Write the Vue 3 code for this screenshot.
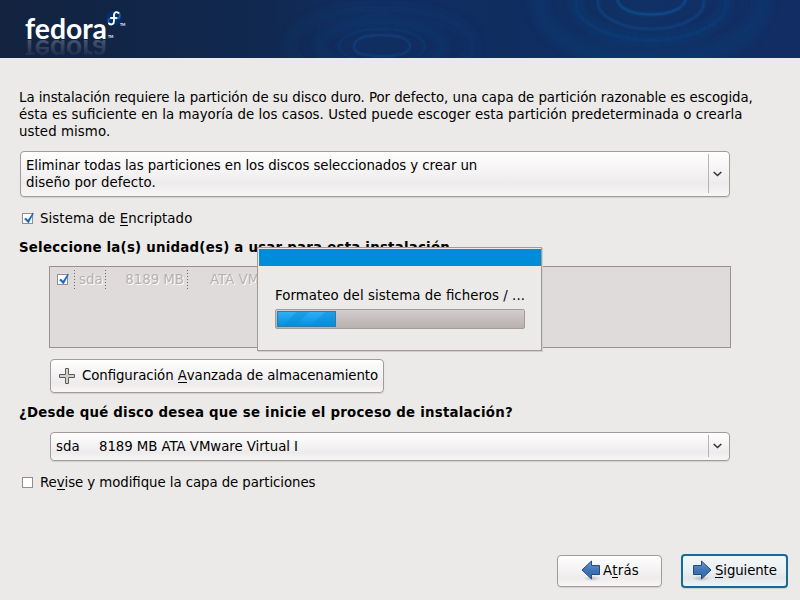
<script setup>
const columns = [
  { text: 'sda', cls: 'name' },
  { text: '8189 MB', cls: 'size' },
  { text: 'ATA VMware Virtual I', cls: 'model' }
]
const progress = 24
</script>

<template>
  <div class="screen">
    <header class="banner">
      <svg width="800" height="58" viewBox="0 0 800 58">
        <defs>
          <linearGradient id="bg" x1="0" x2="1" y1="0" y2="0">
            <stop offset="0" stop-color="#13233f" />
            <stop offset=".15" stop-color="#112547" />
            <stop offset=".32" stop-color="#11284f" />
            <stop offset=".45" stop-color="#112e60" />
            <stop offset=".64" stop-color="#102d60" />
            <stop offset=".8" stop-color="#103165" />
            <stop offset="1" stop-color="#122d64" />
          </linearGradient>
          <linearGradient id="fade" x1="0" x2="0" y1="39" y2="54" gradientUnits="userSpaceOnUse">
            <stop offset="0" stop-color="#fff" stop-opacity=".24" />
            <stop offset="1" stop-color="#fff" stop-opacity=".06" />
          </linearGradient>
          <mask id="mirror" maskUnits="userSpaceOnUse" x="0" y="39" width="140" height="16">
            <rect y="39" width="140" height="16" fill="url(#fade)" />
          </mask>
          <filter id="soft" x="-20%" y="-40%" width="140%" height="180%"><feGaussianBlur stdDeviation="1.1" /></filter>
          <filter id="softer" x="-20%" y="-40%" width="140%" height="180%"><feGaussianBlur stdDeviation="4" /></filter>
        </defs>
        <rect width="800" height="58" fill="url(#bg)" />
        <g fill="none" stroke="#11498b">
          <g filter="url(#softer)">
            <ellipse cx="381" cy="46" rx="62" ry="24" stroke-width="5" opacity=".35" />
            <ellipse cx="381" cy="46" rx="92" ry="38" stroke-width="12" opacity=".1" />
            <ellipse cx="651" cy="2" rx="75" ry="38" stroke-width="6" opacity=".45" />
            <ellipse cx="651" cy="2" rx="112" ry="60" stroke-width="18" opacity=".18" />
          </g>
          <g filter="url(#soft)">
            <ellipse cx="382" cy="46" rx="43" ry="17" stroke-width="2" opacity=".4" />
            <path d="M354 47c0-7 8-12 28-12s28 5 28 11-8 10-28 10-28-3-28-9z" stroke-width="1.800" opacity=".8" />
            <ellipse cx="651" cy="2" rx="53" ry="27" stroke-width="3" opacity=".6" />
            <ellipse cx="651" cy="2" rx="76" ry="38" stroke-width="3" opacity=".25" />
            <path d="M617-2c1 11 16 16.500 34 16.500S685 9 686-2" stroke="#10569b" stroke-width="1.800" />
          </g>
        </g>
        <g class="wordmark" fill="#fff">
          <text id="word" x="25" y="39" textLength="82" lengthAdjust="spacingAndGlyphs">fedora</text>
          <g mask="url(#mirror)">
            <use href="#word" transform="matrix(1 0 0 -1 0 79)" />
          </g>
          <text class="tm" x="108" y="38">TM</text>
          <text class="tm" x="120" y="26">TM</text>
        </g>
        <circle cx="114" cy="18" r="7.600" fill="#062f6e" />
        <path d="M112.800 18.200c-2.300-.5-4.500.8-4.500 3s1.800 3 3 3M114.500 18.500h2.200c2 0 3.200-1.600 3.200-3.100 0-1.900-1.400-3.300-3.200-3.300" fill="none" stroke="#1b63ac" stroke-width="1.600" />
        <path d="M118.500 13c-2-1.700-4.500-.7-4.500 2v6c0 3.400-3 4.400-5 2.500M111 18h5.500" fill="none" stroke="#fff" stroke-width="1.900" stroke-linecap="round" />
      </svg>
    </header>

    <main class="content">
      <p class="intro">
        <span class="l1">La instalación requiere la partición de su disco duro. Por defecto, una capa de partición razonable es escogida,</span><br>
        <span class="l2">ésta es suficiente en la mayoría de los casos. Usted puede escoger esta partición predeterminada o crearla</span><br>
        <span class="l3">usted mismo.</span>
      </p>

      <div class="combo scheme">
        <span class="value"><span class="l4">Eliminar todas las particiones en los discos seleccionados y crear un</span><br><span class="l5">diseño por defecto.</span></span>
        <span class="drop"><svg width="9" height="6" viewBox="0 0 9 6"><path d="M.7 1l3.800 3.500L8.300 1" /></svg></span>
      </div>

      <label class="check encrypt">
        <span class="box"><svg width="13" height="13" viewBox="0 0 13 13"><path d="M2.500 7l1.500-1 2 2.300L10.800 1l.7.500-5 9.500z" /></svg></span>
        <span class="l6">Sistema de <u>E</u>ncriptado</span>
      </label>

      <h2 class="drives-title"><span class="l7">Seleccione la(s) unidad(es) a usar para esta instalación.</span></h2>

      <div class="drives">
        <span class="box"><svg width="13" height="13" viewBox="0 0 13 13"><path d="M2.500 7l1.500-1 2 2.300L10.800 1l.7.500-5 9.500z" /></svg></span>
        <span v-for="c in columns" :key="c.cls" class="cell" :class="c.cls">{{ c.text }}</span>
      </div>

      <button class="btn advanced">
        <svg width="16" height="16" viewBox="0 0 16 16"><path d="M6.500.5h3v6h6v3h-6v6h-3v-6h-6v-3h6z" fill="#d0d1cd" stroke="#5c5e59" /></svg>
        <span class="l8">Configuración <u>A</u>vanzada de almacenamiento</span>
      </button>

      <h2 class="boot-title"><span class="l9">¿Desde qué disco desea que se inicie el proceso de instalación?</span></h2>

      <div class="combo boot">
        <span class="value"><span class="dev">sda</span><span class="l10">8189 MB ATA VMware Virtual I</span></span>
        <span class="drop"><svg width="9" height="6" viewBox="0 0 9 6"><path d="M.7 1l3.800 3.500L8.300 1" /></svg></span>
      </div>

      <label class="check review">
        <span class="box"></span>
        <span class="l11">Re<u>v</u>ise y modifique la capa de particiones</span>
      </label>
    </main>

    <footer class="actions">
      <button class="btn back">
        <svg width="20" height="22" viewBox="0 0 20 22">
          <defs>
            <linearGradient id="blue" x1="0" x2="0" y1="0" y2="1"><stop offset="0" stop-color="#6e9bce" /><stop offset=".5" stop-color="#4075b5" /><stop offset="1" stop-color="#3569aa" /></linearGradient>
            <radialGradient id="shade"><stop offset="0" stop-color="#000" stop-opacity=".2" /><stop offset="1" stop-color="#000" stop-opacity="0" /></radialGradient>
          </defs>
          <ellipse cx="11" cy="18.500" rx="9" ry="2.800" fill="url(#shade)" />
          <path d="M10.500 1v4.500h8v9h-8V19L1 10z" fill="url(#blue)" stroke="#204a87" />
        </svg>
        <span class="l12">A<u>t</u>rás</span>
      </button>
      <button class="btn next">
        <svg width="20" height="22" viewBox="0 0 20 22">
          <ellipse cx="9" cy="18.500" rx="9" ry="2.800" fill="url(#shade)" />
          <path d="M9.500 1v4.500h-8v9h8V19L19 10z" fill="url(#blue)" stroke="#204a87" />
        </svg>
        <span class="l13"><u>S</u>iguiente</span>
      </button>
    </footer>

    <div class="dialog">
      <div class="titlebar"></div>
      <div class="dialog-body">
        <span class="l14">Formateo del sistema de ficheros / ...</span>
        <div class="track"><div class="fill" :style="{ width: progress + '%' }"></div></div>
      </div>
    </div>
  </div>
</template>

<style>
body { margin: 0; }
</style>

<style scoped>
* { box-sizing: border-box; }
.screen {
  position: relative;
  width: 800px;
  height: 600px;
  overflow: hidden;
  display: flex;
  flex-direction: column;
  background: #ebeae8;
  color: #000;
  font: 13.333px/17px "DejaVu Sans", sans-serif;
  font-feature-settings: "liga" 1;
  white-space: nowrap;
}
.banner { height: 58px; flex: none; }
.banner svg, .btn svg, .drop svg, .box svg { display: block; flex: none; }
.wordmark { font: 700 28px Lato, sans-serif; }
.wordmark .tm { font-size: 3.5px; }
.l1 { letter-spacing: -.05px; }
.l2 { letter-spacing: .047px; }
.l3 { letter-spacing: .08px; }
.l4 { letter-spacing: -.075px; }
.l5 { letter-spacing: .05px; }
.l6 { letter-spacing: .08px; }
.l7, .l9 { letter-spacing: .238px; }
.l8 { letter-spacing: -.08px; }
.l10 { letter-spacing: -.06px; }
.l11 { letter-spacing: -.07px; }
.l12 { letter-spacing: .2px; }
.l13 { letter-spacing: -.12px; }
.l14 { letter-spacing: .06px; }
.content {
  flex: 1;
  display: flex;
  flex-direction: column;
  align-items: flex-start;
  padding: 31px 0 0 19px;
}
p, h2 { margin: 0; }
h2 { font-size: inherit; font-weight: bold; line-height: 17px; }
u { text-decoration: none; border-bottom: 1px solid #000; display: inline-block; height: 16px; line-height: 17px; vertical-align: top; }
.intro { height: 51px; }
.combo, .btn {
  border: 1px solid #a39b9b;
  border-radius: 4px;
  background: linear-gradient(#fff, #f2f0f0 55%, #edebeb 72%, #f8f7f8);
  box-shadow: 0 1px 1px #d5d0d0;
}
.combo { display: flex; align-items: center; justify-content: space-between; padding-left: 5px; }
.scheme { width: 710px; height: 46px; margin: 11px 0 0 1px; }
.drop {
  width: 21px;
  align-self: stretch;
  margin: 2px 0 3px;
  display: flex;
  align-items: center;
  justify-content: center;
  border-left: 1px solid #b9b4b4;
  padding-right: 3px;
}
.drop path { fill: none; stroke: #333; stroke-width: 1.6; }
.check { display: flex; align-items: center; height: 17px; margin-left: 3px; gap: 7px; }
.box { flex: none; width: 11px; height: 11px; border: 1px solid #998c8c; background: #fff; }
.box svg { margin: -2px 0 0 -1px; }
.box path { fill: #1262c6; stroke: #1262c6; stroke-width: .5; }
.encrypt { margin-top: 13px; }
.drives-title { margin-top: 12px; }
.drives {
  width: 682px;
  height: 82px;
  margin: 10px 0 0 30px;
  padding: 3px 0 0 7px;
  border: 1px solid #9c9090;
  background: #dfdbda;
  display: flex;
  color: #b5b1b1;
  text-shadow: 1px 1px 0 #fff;
}
.drives .box { margin: 4px 6px 0 0; }
.cell {
  height: 21px;
  line-height: 19px;
  background: repeating-linear-gradient(#746c6c 0 1px, transparent 1px 3px) 0 0 / 1px 100% no-repeat;
}
.name { width: 31px; padding-left: 5px; }
.size { width: 82px; padding-right: 3px; text-align: right; }
.model { padding-left: 23px; }
.advanced { width: 334px; height: 34px; margin: 11px 0 0 31px; padding: 0 0 0 8px; gap: 7px; }
.l8 { margin-bottom: 2px; }
.btn { display: flex; align-items: center; color: #000; font: inherit; line-height: 17px; }
.boot-title { margin-top: 11px; }
.boot { width: 680px; height: 29px; margin: 11px 0 0 31px; }
.dev { display: inline-block; width: 43px; }
.review { margin-top: 13px; }
.actions { display: flex; align-items: center; justify-content: flex-end; gap: 19px; padding: 0 12px 12px 0; }
.back { width: 105px; height: 32px; padding: 0 0 2px 23px; gap: 2px; }
.next {
  width: 107px;
  height: 34px;
  padding: 0 0 2px 9px;
  gap: 3px;
  border: 2px solid #176a93;
  background: linear-gradient(#f3f7f9, #e9eef0 55%, #e2e5e7 72%, #eff4f6);
}
.back svg, .next svg { margin-top: 2px; }
.dialog {
  position: absolute;
  left: 257px;
  top: 247px;
  width: 285px;
  height: 104px;
  padding: 1px 0 0 1px;
  border: 1px solid #a19a9a;
  background: #ebeae8;
  box-shadow: 1px 1px 0 #d3cece;
}
.titlebar { height: 17px; background: #008cd8; }
.dialog-body { padding: 21px 16px; display: flex; flex-direction: column; align-items: flex-start; gap: 5px; }
.track {
  width: 250px;
  height: 20px;
  padding: 1px;
  border: 1px solid #a39b9b;
  border-radius: 2px;
  background: linear-gradient(#d3cdcd, #b9b0b0);
}
.fill {
  height: 100%;
  border: 1px solid #317ca7;
  background: linear-gradient(#0000, #008bd9e0), linear-gradient(135deg, #2cb0f8 24%, #1c9fe6 28% 42%, #2cb0f8 46% 64%, #1c9fe6 68%);
}
</style>
